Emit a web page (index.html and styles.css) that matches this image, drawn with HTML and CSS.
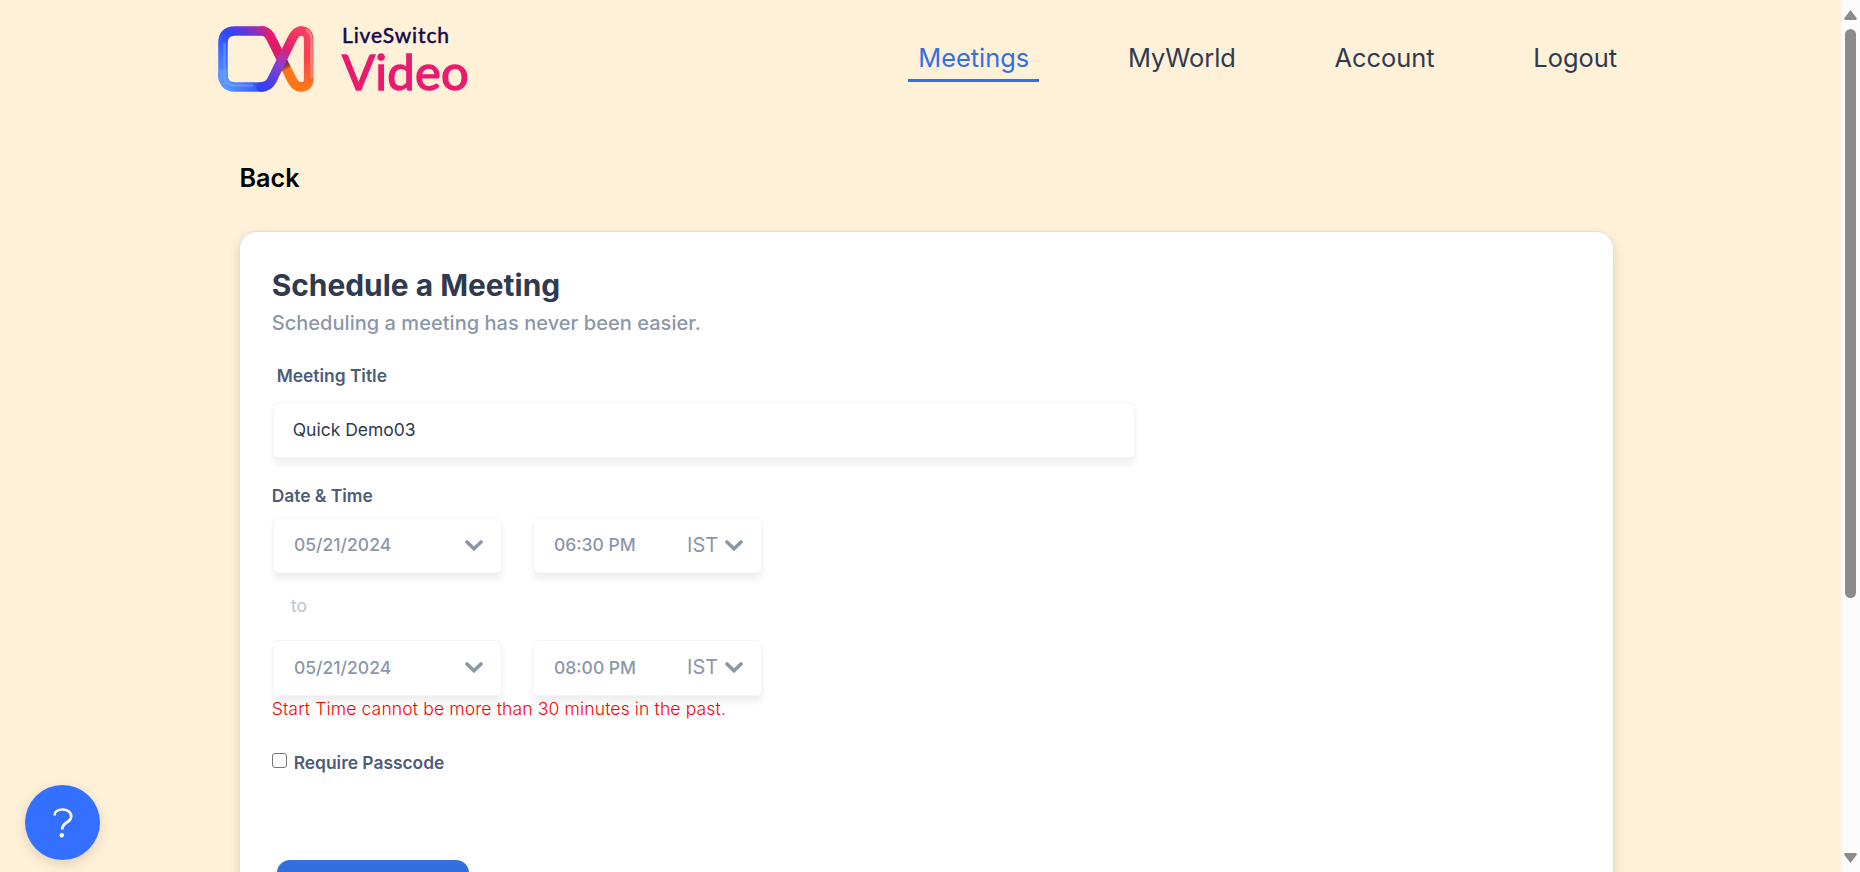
FILE: index.html
```html
<!DOCTYPE html>
<html lang="en">
<head>
<meta charset="utf-8">
<title>Schedule a Meeting</title>
<link rel="stylesheet" href="styles.css">
</head>
<body>
<div class="page">
  <header class="header">
    <a class="brand">
      <svg class="brand-mark" viewBox="0 0 96 66" fill="none" stroke-linecap="round" stroke-linejoin="round">
        <defs>
          <linearGradient id="top" gradientUnits="userSpaceOnUse" x1="5" y1="50" x2="52" y2="0">
            <stop offset="0" stop-color="#4f8eff"/><stop offset=".5" stop-color="#2f46fb"/><stop offset=".68" stop-color="#5a38e0"/><stop offset="1" stop-color="#e91e6f"/>
          </linearGradient>
          <linearGradient id="cross" gradientUnits="userSpaceOnUse" x1="48" y1="60" x2="82" y2="8">
            <stop offset="0" stop-color="#3b3df0"/><stop offset=".4" stop-color="#8a3fd0"/><stop offset=".7" stop-color="#e3206e"/><stop offset="1" stop-color="#f23a62"/>
          </linearGradient>
          <linearGradient id="bottom" gradientUnits="userSpaceOnUse" x1="8" y1="0" x2="52" y2="0">
            <stop offset="0" stop-color="#5796ff"/><stop offset="1" stop-color="#3440f3"/>
          </linearGradient>
          <linearGradient id="right" gradientUnits="userSpaceOnUse" x1="0" y1="4" x2="0" y2="64">
            <stop offset="0" stop-color="#f5406a"/><stop offset=".45" stop-color="#f8424e"/><stop offset="1" stop-color="#ff7a18"/>
          </linearGradient>
          <linearGradient id="down" gradientUnits="userSpaceOnUse" x1="48" y1="6" x2="78" y2="60">
            <stop offset="0" stop-color="#ea1b6e"/><stop offset=".48" stop-color="#d41d63"/><stop offset=".52" stop-color="#6b2338"/><stop offset=".64" stop-color="#8a3a2c"/><stop offset=".7" stop-color="#ff7518"/><stop offset="1" stop-color="#ff7518"/>
          </linearGradient>
        </defs>
        <path d="M44 5 C48 5 50 7 52 10 L74 54 Q78 61 83 61" stroke="url(#down)" stroke-width="9.600"/>
        <path d="M83 61 Q90.700 61 90.700 53 V14 Q90.700 5 83 5" stroke="url(#right)" stroke-width="9.600"/>
        <path d="M85 3.500 Q93.500 4 93.500 14 V51" stroke="#ffb3a6" stroke-opacity=".5" stroke-width="2.600"/>
        <path d="M5 52 V17 Q5 5 17 5 H45" stroke="url(#top)" stroke-width="9.600"/>
        <path d="M5 48 Q5 61 17 61 H44" stroke="url(#bottom)" stroke-width="9.600"/>
        <path d="M6.500 18 V50 Q7 59.500 17 59.500 H34" stroke="#7db0ff" stroke-opacity=".45" stroke-width="2.600"/>
        <path d="M43 61 C49 61 52 58 54 54 L74 13 Q78 5 83 5" stroke="url(#cross)" stroke-width="9.600"/>
      </svg>
      <span class="brand-text"><span class="brand-top">LiveSwitch</span><span class="brand-bottom">Video</span></span>
    </a>
    <nav class="nav">
      <a class="nav-link active">Meetings</a><a class="nav-link">MyWorld</a><a class="nav-link">Account</a><a class="nav-link">Logout</a>
    </nav>
  </header>
  <main class="main">
    <div class="back">Back</div>
    <section class="card">
      <h1 class="title">Schedule a Meeting</h1>
      <p class="subtitle">Scheduling a meeting has never been easier.</p>
      <div class="label label-title">Meeting Title</div>
      <div class="field field-title">Quick Demo03</div>
      <div class="label label-date">Date &amp; Time</div>
      <div class="row">
        <div class="field select"><span class="value">05/21/2024</span><svg class="chevron" viewBox="0 0 18 11"><path d="M2 2 9 8.700 16 2"/></svg></div>
        <div class="field select"><span class="value">06:30 PM</span><span class="zone">IST</span><svg class="chevron" viewBox="0 0 18 11"><path d="M2 2 9 8.700 16 2"/></svg></div>
      </div>
      <div class="to">to</div>
      <div class="row row-end">
        <div class="field select"><span class="value">05/21/2024</span><svg class="chevron" viewBox="0 0 18 11"><path d="M2 2 9 8.700 16 2"/></svg></div>
        <div class="field select"><span class="value">08:00 PM</span><span class="zone">IST</span><svg class="chevron" viewBox="0 0 18 11"><path d="M2 2 9 8.700 16 2"/></svg></div>
      </div>
      <div class="error">Start Time cannot be more than 30 minutes in the past.</div>
      <label class="check"><i class="box"></i><span>Require Passcode</span></label>
      <div class="submit"></div>
    </section>
  </main>
  <button class="help" aria-label="Help"><svg viewBox="0 0 20 30"><path d="M1.500 7.500C1.500 3.500 5 1.500 9.500 1.500S18.200 3.900 18.200 8.200C18.200 15.500 9.200 13 9.200 21.500"/><circle cx="8.800" cy="27.300" r="2.200"/></svg></button>
</div>
<div class="scrollbar"><i class="arrow up"></i><i class="thumb"></i><i class="arrow down"></i></div>
</body>
</html>
```
FILE: styles.css
```css
* { box-sizing: border-box; }
body {
  margin: 0;
  height: 872px;
  display: flex;
  overflow: hidden;
  background: #fff0d8;
  font-family: Inter, "Liberation Sans", sans-serif;
}
.page { flex: 1; height: 872px; overflow: hidden; }

/* Header */
.header { display: flex; height: 118px; padding: 0 214px 0 218px; justify-content: space-between; align-items: flex-start; }
.brand { display: flex; gap: 28px; }
.brand-mark { width: 96px; height: 66px; margin-top: 26px; }
.brand-text { display: flex; flex-direction: column; font-family: Lato, "Liberation Sans", sans-serif; }
.brand-top { margin-top: 23px; font-size: 21px; line-height: 24px; letter-spacing: 0.9px; color: #14084a; -webkit-text-stroke: 0.5px #14084a; }
.brand-bottom { margin-top: -2px; font-size: 49px; line-height: 52px; letter-spacing: 0.2px; color: #ea1b6e; -webkit-text-stroke: 1.4px #ea1b6e; }
.nav { display: flex; gap: 78.700px; padding-top: 40px; }
.nav-link { height: 42px; padding: 0 10px; font-size: 25.400px; line-height: 36px; color: #2d3a4f; border-bottom: 3px solid transparent; }
.nav-link.active { color: #346fe0; border-bottom-color: #346fe0; }

/* Main */
.main { width: 1375px; margin-left: 239px; }
.back { height: 113px; padding: 42px 0 0 0.500px; font-size: 25.200px; line-height: 36px; font-weight: 600; color: #000; }
.card {
  height: 760px;
  padding: 35px 0 0 31.700px;
  background: #fff;
  border: 1px solid #dfe0e2;
  border-radius: 18px;
  box-shadow: 0 6px 12px rgba(60, 50, 30, 0.16);
}
.title { margin: 0; font-size: 29.900px; line-height: 36px; font-weight: 700; color: #2f3a4e; }
.subtitle { margin: 6px 0 0; font-size: 20px; line-height: 28px; font-weight: 450; letter-spacing: 0.04px; color: #8b97a8; }
.label { font-size: 17.400px; line-height: 24px; font-weight: 600; color: #4d5c78; }
.label-title { margin: 27px 0 0 5px; }
.field {
  border: 1px solid #f6f6f6;
  border-radius: 5px;
  background: #fff;
  box-shadow: 0 7px 6px rgba(0, 0, 0, 0.055), 0 2px 6px rgba(0, 0, 0, 0.02);
}
.field-title { width: 862px; height: 56px; margin: 14px 0 0 1px; padding-left: 19px; font-size: 17.500px; line-height: 54px; color: #2f3a4e; }
.label-date { margin-top: 26px; }
.row { display: flex; gap: 31px; margin: 9px 0 0 1px; }
.select { display: flex; align-items: center; width: 229px; height: 56px; padding: 0 17.500px 0 20.300px; color: #8b97a8; }
.value { flex: 1; margin-bottom: 2px; font-size: 17.500px; font-weight: 450; }
.zone { margin-right: 7px; font-size: 20px; }
.chevron { width: 18px; height: 11px; fill: none; stroke: #8b97a8; stroke-width: 3.600; stroke-linecap: round; }
.to { margin: 21px 0 0 19px; font-size: 17.500px; line-height: 24px; font-weight: 500; color: #c3cad6; }
.row-end { margin-top: 22px; }
.row-end .zone, .row-end .chevron { margin-bottom: 2px; }
.error { margin-top: 1px; font-size: 17.600px; line-height: 24px; font-weight: 300; letter-spacing: 0.1px; color: #f00; }
.check { display: flex; margin-top: 30px; gap: 7px; font-size: 17.400px; line-height: 24px; font-weight: 600; color: #4d5c78; }
.box { width: 15px; height: 15px; margin-top: 2px; border: 1px solid #767676; border-radius: 3px; }
.submit { width: 192px; height: 60px; margin: 85px 0 0 5px; border-radius: 13px; background: #346fe0; }

/* Floating help */
.help {
  position: fixed; left: 25px; bottom: 12px;
  display: flex; align-items: center; justify-content: center;
  width: 75px; height: 75px; padding: 0;
  border: 0; border-radius: 50%;
  background: #3370ff;
  box-shadow: 0 4px 12px rgba(90, 70, 30, 0.18);
}
.help svg { width: 20px; height: 30px; margin-top: 1px; fill: none; stroke: #fff; stroke-width: 2.700; }
.help circle { fill: #fff; stroke: none; }

/* Scrollbar */
.scrollbar { display: flex; flex-direction: column; align-items: center; width: 19px; height: 872px; padding: 10px 0 9px; background: #fcfcfc; margin-left: auto; }
.arrow { width: 13px; height: 10px; background: #8b8b8b; clip-path: polygon(50% 0, 100% 85%, 92% 100%, 8% 100%, 0 85%); }
.arrow.down { margin-top: auto; transform: scaleY(-1); }
.thumb { width: 11px; height: 569px; margin-top: 9px; border-radius: 6px; background: #8b8b8b; }
```
